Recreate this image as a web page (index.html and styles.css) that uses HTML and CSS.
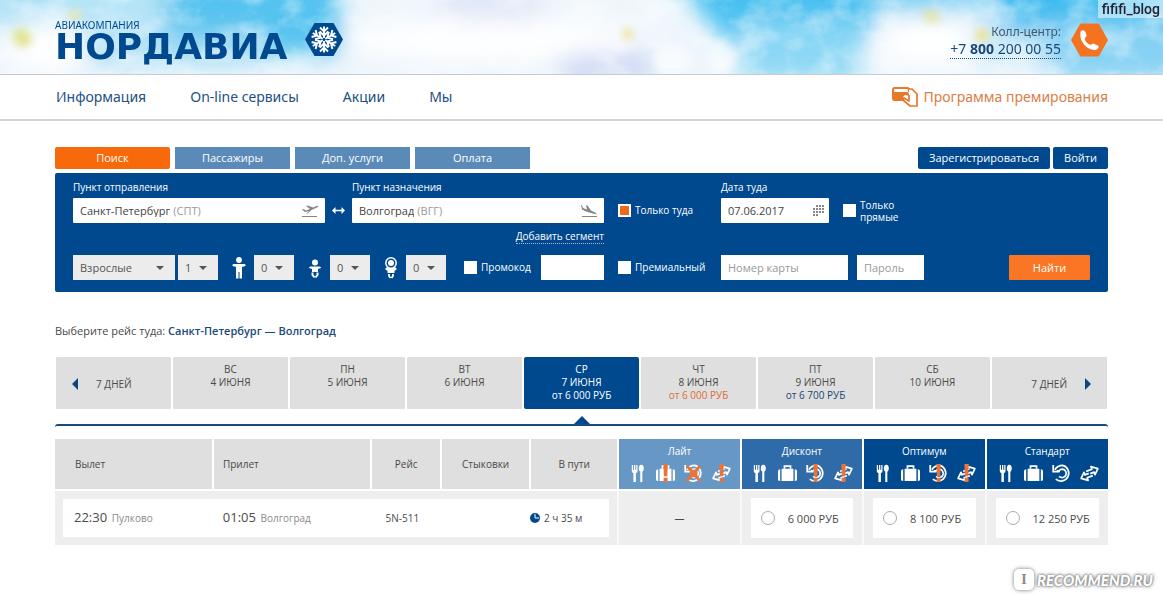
FILE: index.html
```
<!DOCTYPE html>
<html lang="ru">
<head>
<meta charset="utf-8">
<title>Нордавиа — поиск рейсов</title>
<meta name="viewport" content="width=device-width, initial-scale=1">
<link rel="stylesheet" href="styles.css">
</head>
<body>
<svg class="defs" aria-hidden="true">
  <symbol id="food" viewBox="0 0 20 20"><path fill="#fff" d="M4 1h1.300v5h1V1h1.400v5h1V1H10v6.500q0 1.500-1.700 2V19H5.700V9.500Q4 9 4 7.500z"/><ellipse cx="14" cy="4.500" rx="2.600" ry="3.700" fill="#fff"/><path fill="#fff" d="M12.900 7h2.200v12h-2.200z"/></symbol>
  <symbol id="bag" viewBox="0 0 20 20"><path fill="#fff" d="M0 7.500Q0 5.500 2.300 5.500V18Q0 18 0 16zM3.800 5h12.400v13H3.800zM17.700 5.500Q20 5.500 20 7.500V16q0 2-2.300 2z"/><path d="M6.800 5V2.300h6.400V5" fill="none" stroke="#fff" stroke-width="1.800"/></symbol>
  <symbol id="refund" viewBox="0 0 20 20"><path d="M3 6Q6 1.500 11 1.500A8.300 8.300 0 1 1 4 16M5 7.200h2.500Q8.500 5.500 11 5.500A4.400 4.400 0 1 1 7.500 13" fill="none" stroke="#fff" stroke-width="1.800"/><path d="M1.300 1v7H8" fill="none" stroke="#fff" stroke-width="1.900"/></symbol>
  <symbol id="change" viewBox="0 0 20 20"><path d="M6.500 7.800l6-2.300-1-2.700 7.300 2-3 6.500-1-2.700-4 1.500M13.500 12.200l-6 2.300 1 2.700-7.300-2 3-6.500 1 2.700 4-1.500" fill="none" stroke="#fff" stroke-width="1.800" stroke-linejoin="round"/></symbol>
  <symbol id="warn" viewBox="0 0 20 20"><path fill="#e8743a" d="M7.800 0h4.600l-.5 13H8.300zM8 14.500h4.200V19H8z"/></symbol>
  <symbol id="cross" viewBox="0 0 20 20"><path d="M3 2l14 16M17 2L3 18" stroke="#e8743a" stroke-width="3"/><path d="M6 6h8v8H6z" fill="#e8743a"/></symbol>
</svg>

<header class="top">
  <svg class="sky" viewBox="0 0 1163 74" preserveAspectRatio="xMidYMid slice" aria-hidden="true">
    <defs>
      <filter id="soft" x="-30%" y="-50%" width="160%" height="200%"><feGaussianBlur stdDeviation="12"/></filter>
      <filter id="fine" x="-30%" y="-50%" width="160%" height="200%"><feGaussianBlur stdDeviation="4"/></filter>
      <filter id="cloud" x="0" y="0" width="100%" height="100%"><feTurbulence type="fractalNoise" baseFrequency=".03 .04" numOctaves="4" seed="8"/><feColorMatrix values="0 0 0 0 1  0 0 0 0 1  0 0 0 0 1  2.500 0 0 0 -1"/></filter>
    </defs>
    <rect width="1163" height="74" fill="#eef6fc"/>
    <g filter="url(#soft)">
      <rect x="-20" y="-20" width="60" height="45" fill="#9fdcf5"/>
      <rect x="40" y="-30" width="130" height="60" fill="#b5e4f7"/>
      <rect x="165" y="-30" width="175" height="85" fill="#55c3ef"/>
      <rect x="90" y="35" width="170" height="30" fill="#a4dcf5"/>
      <rect x="440" y="-15" width="100" height="35" fill="#dfe6f7"/>
      <rect x="560" y="52" width="90" height="30" fill="#c9d6f3"/>
      <path d="M665-30H880L870 35 780 75 725 40z" fill="#44c0f0"/>
      <path d="M740 20h120v60h-120z" fill="#8ad7f5"/>
      <path d="M870-30h130v42h-130z" fill="#7dd0f3"/>
      <path d="M1000-30h190v60h-190z" fill="#3abbf0"/>
      <path d="M1050 20h140v60h-140z" fill="#86d1f4"/>
      <path d="M960 30h90v30h-90z" fill="#c2e7f8"/>
      <ellipse cx="930" cy="42" rx="48" ry="24" fill="#fff"/>
      <ellipse cx="45" cy="45" rx="40" ry="25" fill="#fff"/>
      <ellipse cx="490" cy="40" rx="150" ry="20" fill="#fff"/>
    </g>
    <rect width="1163" height="74" filter="url(#cloud)" opacity=".4"/>
    <g filter="url(#fine)">
      <path d="M12 34l8-7 7 5 6 5-5 9-10 1z" fill="#dfe28e"/>
      <path d="M70 13l8-3 2 8-8 2zM622 32l8-4 4 8-8 4zM923 11l14 3 3 8-14-2zM975 32l10-4 5 10-12 4z" fill="#eee08a"/>
      <ellipse cx="672" cy="60" rx="18" ry="14" fill="#fff" opacity=".6"/>
      <ellipse cx="722" cy="56" rx="14" ry="15" fill="#fff" opacity=".6"/>
    </g>
  </svg>
  <div class="wrap top-row">
    <a class="logo" href="#">
      <span class="logo-text"><span class="logo-small">АВИАКОМПАНИЯ</span><span class="logo-big">НОРДАВИА</span></span>
      <svg class="logo-hex" viewBox="0 0 38 33" aria-hidden="true">
        <path fill="#00498f" d="M9.500 0h19L38 16.500 28.500 33h-19L0 16.500z"/>
        <g fill="none" stroke="#fff" stroke-width="1.900">
          <g id="arm"><path d="M19 15V3.500M15 4.500l4 4 4-4M14.800 8.500l4.200 4.200 4.200-4.200"/></g>
          <use href="#arm" transform="rotate(60 19 16.500)"/><use href="#arm" transform="rotate(120 19 16.500)"/><use href="#arm" transform="rotate(180 19 16.500)"/><use href="#arm" transform="rotate(240 19 16.500)"/><use href="#arm" transform="rotate(300 19 16.500)"/>
        </g>
      </svg>
    </a>
    <div class="call">
      <div class="call-text"><span>Колл-центр:</span><a class="phone" href="tel:+78002000055">+7 <b>800</b> 200 00 55</a></div>
      <svg class="call-icon" viewBox="0 0 38 34" aria-hidden="true"><path fill="#f47321" d="M9.500 0h19L38 17 28.500 34h-19L0 17z"/><path fill="#fff" d="M10 8c2-2 4-1 5 1l1 3c0 2-2 2-2 4 1 3 3 5 6 6 2 0 2-2 4-1l4 2c1 1 0 3-2 4-8 2-19-9-16-19z"/></svg>
    </div>
  </div>
  <div class="user-tag">fififi_blog</div>
</header>

<nav class="nav">
  <div class="wrap nav-row">
    <a href="#">Информация</a><a href="#">On-line сервисы</a><a href="#">Акции</a><a href="#">Мы</a>
    <a class="bonus" href="#"><svg viewBox="0 0 26 20" aria-hidden="true"><path fill="none" stroke="#e8792b" stroke-width="2.200" stroke-linejoin="round" d="M10 13H3q-2 0-2-2V3q0-2 2-2h12q2 0 2 2v2"/><path fill="#e8792b" d="M1 5h15l2 4-5-1-2 2 1 4H3q-2 0-2-2z"/><path d="M17 2h3l5 5v12h-7l-7-6 1-2 5 3V8" fill="#fff" stroke="#e8792b" stroke-width="1.700" stroke-linejoin="round"/></svg>Программа премирования</a>
  </div>
</nav>

<main class="wrap">
  <div class="tabs">
    <button class="tab active" type="button">Поиск</button><button class="tab" type="button">Пассажиры</button><button class="tab" type="button">Доп. услуги</button><button class="tab" type="button">Оплата</button>
    <div class="auth"><button type="button">Зарегистрироваться</button><button type="button">Войти</button></div>
  </div>

  <form class="search">
    <div class="cities">
      <div class="field">
        <label for="from">Пункт отправления</label>
        <div class="box"><input id="from" type="text" value="Санкт-Петербург"><span class="code">(СПТ)</span>
          <svg viewBox="0 0 20 14" aria-hidden="true"><path fill="#858585" d="M2 5.500l1.500-.5 2.500 1.500L10 5 6 2l1.500-.5L13 3.500l3.500-1.500q2-.5 2 .3l-1 1-6 2.800-4 3.500H6.300L9 7 5 8z"/><path d="M2 12.500h15" stroke="#858585"/></svg></div>
      </div>
      <svg class="swap" viewBox="0 0 13 7" aria-hidden="true"><path fill="#fff" d="M0 3.500L3.500 0v2.700h6V0L13 3.500 9.500 7V4.300h-6V7z"/></svg>
      <div class="field">
        <label for="to">Пункт назначения</label>
        <div class="box"><input id="to" type="text" value="Волгоград"><span class="code">(ВГГ)</span>
          <svg viewBox="0 0 20 14" aria-hidden="true"><path fill="#858585" d="M2 1l1 .5 1 2.500L8 5.500 7 1l1.500.5 3.500 5L16 8.500q2 1 1.500 1.700l-2-.2L7 7.500 3 5.500z"/><path d="M3 12.500h15" stroke="#858585"/></svg></div>
      </div>
    </div>
    <label class="check low"><input type="checkbox" checked>Только туда</label>
    <div class="dates">
      <div class="field date"><label for="date">Дата туда</label>
        <div class="box"><input id="date" type="text" value="07.06.2017">
          <svg class="cal" viewBox="0 0 11 11" aria-hidden="true"><path d="M3 1h8M0 4h11M0 7h11M0 10h5" stroke="#888" stroke-width="2" stroke-dasharray="2 1"/></svg></div></div>
      <label class="check low two"><input type="checkbox">Только<br>прямые</label>
    </div>

    <a class="segment" href="#">Добавить сегмент</a>

    <div class="people">
      <span class="sel type"><select aria-label="Тип пассажира"><option>Взрослые</option></select></span>
      <span class="sel"><select aria-label="Взрослые"><option>1</option></select></span>
      <svg viewBox="0 0 14 22" aria-hidden="true"><circle cx="7" cy="3" r="2.900" fill="#fff"/><path fill="#fff" d="M.5 9Q0 7.500 1.500 7h11q1.500.5 1 2l-3.500 1v11.500H7.500V15h-1v6.500H4V10z"/></svg>
      <span class="sel"><select aria-label="Дети"><option>0</option></select></span>
      <svg viewBox="0 0 14 22" aria-hidden="true"><circle cx="7" cy="5.500" r="3" fill="#fff"/><path fill="#fff" d="M1 11q0-1.500 1.500-1.500h9Q13 9.500 13 11l-3 1v3H4v-3z"/><path d="M4.500 15.500v2.500l2 2.500M9.500 15.500v2.500l-2 2.500" fill="none" stroke="#fff" stroke-width="2"/></svg>
      <span class="sel"><select aria-label="Младенцы"><option>0</option></select></span>
      <svg viewBox="0 0 14 22" aria-hidden="true"><circle cx="7" cy="6" r="5.200" fill="none" stroke="#fff" stroke-width="1.500"/><circle cx="7" cy="6" r="3" fill="#fff"/><path fill="#fff" d="M1 12l2-2q4 2 8 0l2 2-2.500 2v2h-7v-2z"/><path d="M5 17v2l1.500 2M9 17v2l-1.500 2" fill="none" stroke="#fff" stroke-width="1.800"/></svg>
      <span class="sel"><select aria-label="Младенцы на руках"><option>0</option></select></span>
      <label class="check promo"><input type="checkbox">Промокод</label>
      <input class="plain code-input" type="text" aria-label="Промокод">
    </div>
    <label class="check"><input type="checkbox">Премиальный</label>
    <div class="card">
      <input class="plain number" type="text" placeholder="Номер карты" aria-label="Номер карты">
      <input class="plain pass" type="password" placeholder="Пароль" aria-label="Пароль">
      <button class="find" type="submit">Найти</button>
    </div>
  </form>

  <h1 class="choose">Выберите рейс туда: <b>Санкт-Петербург — Волгоград</b></h1>

  <div class="days">
    <button class="day edge" type="button"><i class="left"></i>7 ДНЕЙ</button>
    <button class="day" type="button"><span>ВС</span><span>4 ИЮНЯ</span></button>
    <button class="day" type="button"><span>ПН</span><span>5 ИЮНЯ</span></button>
    <button class="day" type="button"><span>ВТ</span><span>6 ИЮНЯ</span></button>
    <button class="day current" type="button"><span>СР</span><span>7 ИЮНЯ</span><span>от 6 000 РУБ</span></button>
    <button class="day" type="button"><span>ЧТ</span><span>8 ИЮНЯ</span><span class="cheap">от 6 000 РУБ</span></button>
    <button class="day" type="button"><span>ПТ</span><span>9 ИЮНЯ</span><span class="price">от 6 700 РУБ</span></button>
    <button class="day" type="button"><span>СБ</span><span>10 ИЮНЯ</span></button>
    <button class="day edge next" type="button">7 ДНЕЙ<i class="right"></i></button>
  </div>
  <div class="pointer"></div>
  <div class="line"></div>

  <table class="flights">
    <colgroup><col class="c-city"><col class="c-city"><col class="c-num"><col class="c-mid"><col class="c-mid"><col class="c-fare"><col class="c-fare"><col class="c-fare"><col class="c-fare"></colgroup>
    <thead><tr>
      <th class="first">Вылет</th><th class="second">Прилет</th><th class="mid">Рейс</th><th class="mid">Стыковки</th><th class="mid">В пути</th>
      <th class="fare lite">Лайт<div class="icons"><svg><use href="#food"/></svg><svg><use href="#bag"/><use href="#warn"/></svg><svg><use href="#refund"/><use href="#cross"/></svg><svg><use href="#change"/><use href="#warn"/></svg></div></th>
      <th class="fare discount">Дисконт<div class="icons"><svg><use href="#food"/></svg><svg><use href="#bag"/></svg><svg><use href="#refund"/><use href="#warn"/></svg><svg><use href="#change"/><use href="#warn"/></svg></div></th>
      <th class="fare">Оптимум<div class="icons"><svg><use href="#food"/></svg><svg><use href="#bag"/></svg><svg><use href="#refund"/><use href="#warn"/></svg><svg><use href="#change"/><use href="#warn"/></svg></div></th>
      <th class="fare">Стандарт<div class="icons"><svg><use href="#food"/></svg><svg><use href="#bag"/></svg><svg><use href="#refund"/></svg><svg><use href="#change"/></svg></div></th>
    </tr></thead>
    <tbody><tr>
      <td class="flight" colspan="5"><div class="flight-box">
        <span><b>22:30</b> Пулково</span><span><b>01:05</b> Волгоград</span><span>5N-511</span>
        <span class="time"><svg viewBox="0 0 10 10" aria-hidden="true"><circle cx="5" cy="5" r="5" fill="#00498f"/><path d="M5 1v4h4" fill="none" stroke="#fff"/></svg>2 ч 35 м</span>
      </div></td>
      <td class="none">—</td>
      <td class="offer"><label><input type="radio" name="fare">6 000 РУБ</label></td>
      <td class="offer"><label><input type="radio" name="fare">8 100 РУБ</label></td>
      <td class="offer"><label><input type="radio" name="fare">12 250 РУБ</label></td>
    </tr></tbody>
  </table>
</main>

<div class="stamp"><span class="stamp-i">I</span><span>RECOMMEND.RU</span></div>
</body>
</html>
```
FILE: styles.css
```
* { box-sizing: border-box; }
body { margin: 0; position: relative; min-height: 100vh; background: #fff; color: #4a4a4a; font: 11px/13px "Open Sans", "Noto Sans", sans-serif; }
a { color: inherit; text-decoration: none; }
button, input, select { font: inherit; color: inherit; margin: 0; padding: 0; border: 0; border-radius: 0; }
button { cursor: pointer; }
svg { display: block; }
.defs { position: absolute; width: 0; height: 0; }
.wrap { padding: 0 55px; }

.top { position: relative; height: 75px; border-bottom: 1px solid #c4ccd2; overflow: hidden; }
.sky { position: absolute; inset: 0; width: 100%; height: 100%; }
.top-row { position: relative; display: flex; justify-content: space-between; }
.logo { display: flex; width: 288px; justify-content: space-between; padding-top: 19px; color: #00498f; }
.logo-text { display: flex; flex-direction: column; }
.logo-small { font: 10px/12px "Noto Sans", sans-serif; }
.logo-big { font: bold 36px/32px "DejaVu Sans", sans-serif; }
.logo-hex { width: 38px; height: 33px; margin-top: 4px; }
.call { display: flex; gap: 10px; padding-top: 23px; }
.call-text { display: flex; flex-direction: column; align-items: flex-end; font: 12px/17px "Noto Sans", sans-serif; color: #44586a; }
.phone { font-size: 14px; line-height: 18px; color: #1a4878; border-bottom: 1px dotted #1a4878; }
.call-icon { width: 37px; height: 34px; }
.user-tag { position: absolute; top: 0; right: 0; padding: 0 3px 0 4px; background: rgba(255, 255, 255, .5); color: #223; font: 500 14px/18px Roboto, sans-serif; }

.nav { border-bottom: 2px solid #d3d3d3; }
.nav-row { display: flex; gap: 44px; padding: 0 55px 0 56px; font: 14px/44px "Noto Sans", sans-serif; color: #23507f; }
.bonus { display: flex; align-items: center; gap: 6px; margin-left: auto; color: #db7d45; }
.bonus svg { width: 26px; height: 20px; }

.tabs { display: flex; gap: 5px; margin-top: 26px; }
.tab { width: 115px; height: 22px; padding-bottom: 2px; background: #5a8ab8; color: #fff; }
.tab.active { background: #f7690a; border-radius: 2px; }
.auth { display: flex; gap: 3px; margin-left: auto; }
.auth button { height: 22px; padding: 0 11px 2px; background: #00498f; color: #fff; border-radius: 2px; }

.search { display: grid; grid-template-columns: 531fr 89fr 369fr; column-gap: 14px; margin-top: 4px; padding: 8px 18px 12px; background: #00498f; border-radius: 2px; color: #fff; font-size: 10px; }
.cities, .dates { display: flex; align-items: flex-end; }
.field { display: flex; flex-direction: column; gap: 4px; }
.cities .field { flex: 1; }
.box { display: flex; align-items: center; gap: 3px; height: 25px; padding: 0 5px 0 7px; background: #fff; border-radius: 1px; color: #444; font-size: 11px; }
.box input { field-sizing: content; background: none; }
.box svg { width: 20px; height: 14px; margin-left: auto; }
.box .cal { width: 11px; height: 11px; }
.code { color: #999; }
.swap { width: 13px; height: 7px; margin: 0 7px 9px; }
.date { width: 108px; }
.check { display: flex; align-items: center; gap: 4px; white-space: nowrap; }
.check.low { align-self: end; height: 25px; }
.two { margin-left: 14px; line-height: 12px; }
.check input { appearance: none; width: 13px; height: 13px; background: #fff; flex: none; }
.check input:checked { background: #ee6a1a; border: 2px solid #fff; }
.segment { grid-column: 1; justify-self: end; margin: 6px 0 11px; border-bottom: 1px dotted #9fbfe0; line-height: 14px; }
.people { grid-column: 1; }
.people, .card { display: flex; align-items: center; height: 25px; }
.people svg { width: 14px; height: 22px; margin: 0 8px 0 14px; flex: none; }
.sel { position: relative; width: 40px; flex: none; }
.sel.type { width: 102px; margin-right: 3px; }
.sel select { appearance: none; display: block; width: 100%; height: 25px; padding-left: 7px; background: #ececec; color: #555; font-size: 11px; }
.sel::after { content: ""; position: absolute; right: 11px; top: 11px; border: 4px solid transparent; border-top-color: #555; border-bottom: 0; pointer-events: none; }
.promo { margin-left: 18px; }
.plain { height: 25px; padding: 0 7px; background: #fff; color: #444; font-size: 11px; }
.plain::placeholder { color: #999; }
.code-input { width: 63px; margin-left: auto; }
.number { width: 127px; margin-right: 9px; }
.pass { width: 67px; }
.find { width: 81px; height: 25px; margin-left: auto; background: #fa7624; color: #fff; font-size: 11px; border-radius: 1px; }

.choose { margin: 32px 0 19px; font-size: 11px; line-height: 14px; font-weight: 400; }
.choose b { color: #1a4878; font-weight: 600; }

.days { display: grid; grid-template-columns: repeat(9, 1fr); gap: 2px; padding: 0 1px; }
.day { display: flex; flex-direction: column; align-items: center; justify-content: flex-start; height: 52px; padding-top: 6px; background: #dedfde; color: #4a4a4a; font-size: 10px; line-height: 13px; border-radius: 1px; }
.day.current { background: #00498f; color: #fff; border-radius: 2px; }
.day .cheap { color: #dd6d38; }
.day .price { color: #1a4878; }
.day.edge { flex-direction: row; gap: 18px; padding: 2px 16px 0; }
.day.next { justify-content: flex-end; }
.left, .right { border: 6px solid transparent; }
.left { border-left: 0; border-right-color: #0e4483; }
.right { border-right: 0; border-left-color: #0e4483; }
.pointer { width: 0; margin: 7px auto 0; border: 8px solid transparent; border-top: 0; border-bottom-color: #00498f; }
.line { height: 6px; border-top: 2px solid #174a80; border-radius: 6px; }

.flights { width: 100%; margin-top: 9px; table-layout: fixed; border-collapse: collapse; font-size: 10px; }
.c-city { width: 15%; }
.c-num { width: 6.700%; }
.c-mid { width: 8.400%; }
.c-fare { width: 11.625%; }
.flights th { height: 51px; padding: 0; background: #dedfde; border-right: 2px solid #fff; border-bottom: 2px solid #fff; font-weight: 400; text-align: left; }
.flights th.first { padding-left: 20px; }
.flights th.second { padding-left: 9px; }
.flights th.mid { text-align: center; }
.flights th.fare { background: #00498f; color: #fff; text-align: center; }
.flights th.lite { background: #6797c4; }
.flights th.discount { background: #306ba9; }
.flights th:last-child, .flights td:last-child { border-right: 0; }
.icons { display: flex; justify-content: center; gap: 9px; margin-top: 6px; }
.icons svg { width: 19px; height: 19px; }
.flights td { height: 55px; padding: 0 8px; background: #eee; border-right: 2px solid #f8f8f8; text-align: center; }
.flight-box { display: grid; grid-template-columns: 149fr 163fr 87fr 137fr; align-items: center; height: 38px; padding-left: 11px; background: #fff; text-align: left; color: #8a8a8a; }
.flight-box b { margin-right: 2px; font-size: 13px; font-weight: 400; color: #4a4a4a; }
.flight-box span:nth-child(3) { color: #4a4a4a; }
.time { display: flex; align-items: center; justify-content: flex-end; gap: 4px; padding-right: 27px; color: #4a4a4a; }
.time svg { width: 10px; height: 10px; }
.offer label { display: flex; align-items: center; gap: 13px; height: 40px; margin: 0 1px; padding-left: 10px; background: #fff; font-size: 11px; }
.offer input { appearance: none; width: 14px; height: 14px; border: 1px solid #aaa; border-radius: 50%; background: #fff; }

.stamp { position: absolute; right: 10px; bottom: 10px; display: flex; align-items: center; gap: 3px; color: #fff; font: italic 900 15px/20px Lato, sans-serif; text-shadow: 0 0 2px #777, 0 0 3px #888, 0 0 4px #999; }
.stamp-i { width: 20px; height: 21px; border-radius: 5px; background: #fff; color: #888; font: bold 14px/21px "Liberation Serif", serif; text-align: center; text-shadow: none; box-shadow: 0 0 4px #777; }
```
